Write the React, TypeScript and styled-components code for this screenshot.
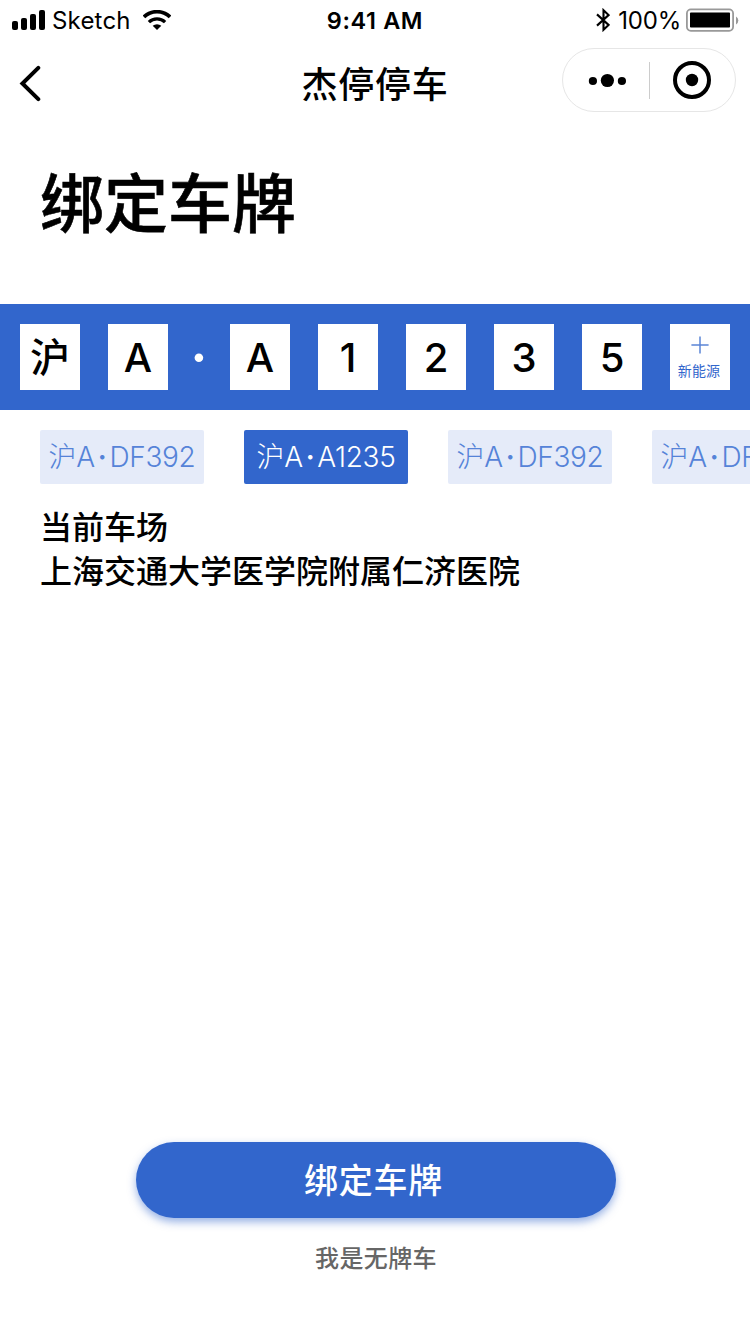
import React from 'react';
import styled, { createGlobalStyle } from 'styled-components';

const BLUE = '#3266cc';

const GlobalStyle = createGlobalStyle`
  * { box-sizing: border-box; }
  body {
    margin: 0;
    background: #fff;
    color: #000;
    font-family: Inter, "Noto Sans CJK SC", sans-serif;
  }
  button { font: inherit; border: 0; padding: 0; background: none; color: inherit; }
  svg { display: block; flex: none; }
`;

const Page = styled.div`
  width: 750px;
  height: 1334px;
  overflow: hidden;
  display: flex;
  flex-direction: column;
  background: #fff;
`;

const StatusBar = styled.header`
  height: 40px;
  padding: 0 11px 0 12px;
  display: grid;
  grid-template-columns: 1fr auto 1fr;
  align-items: center;
  font-size: 24px;
  line-height: 38px;
`;

const StatusGroup = styled.div<{ $end?: boolean }>`
  display: flex;
  align-items: center;
  justify-content: ${(p) => (p.$end ? 'flex-end' : 'flex-start')};
`;

const Carrier = styled.span`
  width: 98px;
  padding: 2px 0 0 7px;
  letter-spacing: 0.2px;
`;

const Clock = styled.span`
  padding: 2px 1px 0 0;
  font-weight: 600;
  font-size: 23.5px;
  letter-spacing: 0.6px;
`;

const BatteryLevel = styled.span`
  margin: 0 5px 0 8px;
  padding-top: 2px;
  letter-spacing: -0.2px;
`;

const NavBar = styled.nav`
  height: 88px;
  padding: 8px 14px 16px 18px;
  display: grid;
  grid-template-columns: 1fr auto 1fr;
  align-items: center;
`;

const BackButton = styled.button`
  justify-self: start;
  margin-top: 6px;
`;

const NavTitle = styled.h1`
  margin: 10px 4px 0 0;
  font-size: 36px;
  line-height: 50px;
  font-weight: 500;
  letter-spacing: 0.8px;
`;

const Capsule = styled.div`
  justify-self: end;
  width: 174px;
  height: 64px;
  border: 1px solid #e6e6e6;
  border-radius: 32px;
  display: flex;
  align-items: center;
`;

const CapsuleButton = styled.button`
  flex: 1;
  display: flex;
  justify-content: center;
`;

const CapsuleDivider = styled.div`
  width: 1px;
  height: 37px;
  background: #ccc;
`;

const Heading = styled.h2`
  margin: 0;
  height: 176px;
  padding: 31px 40px 0;
  font-size: 64px;
  line-height: 90px;
  font-weight: 500;
  -webkit-text-stroke: 0.6px #000;
`;

const PlateBar = styled.section`
  height: 106px;
  padding: 20px;
  display: flex;
  justify-content: space-between;
  background: ${BLUE};
`;

const PlateCell = styled.div`
  width: 60px;
  height: 66px;
  display: flex;
  align-items: center;
  justify-content: center;
  background: #fff;
  font-size: 40px;
  line-height: 66px;
  font-weight: 500;
  padding-top: 2px;
`;

const PlateDot = styled.div`
  width: 6px;
  display: flex;
  align-items: center;
  justify-content: center;
`;

const EnergyCell = styled.button`
  width: 60px;
  height: 66px;
  display: flex;
  flex-direction: column;
  align-items: center;
  padding-top: 12px;
  background: #fff;
  color: ${BLUE};
`;

const EnergyLabel = styled.span`
  margin: 7px 2px 0 0;
  font-size: 14px;
  line-height: 20px;
  font-weight: 400;
  letter-spacing: 0.15px;
  white-space: nowrap;
`;

const ChipRow = styled.div`
  display: flex;
  gap: 40px;
  padding: 20px 0 0 40px;
`;

const Chip = styled.button<{ $active?: boolean }>`
  flex: none;
  width: 164px;
  height: 54px;
  border-radius: 2px;
  background: ${(p) => (p.$active ? BLUE : '#e5ebf9')};
  color: ${(p) => (p.$active ? '#fff' : '#5583d8')};
  font-size: 28px;
  line-height: 55px;
  font-weight: 300;
  letter-spacing: -0.3px;
  text-align: center;
  white-space: nowrap;
`;

const ChipDot = styled.span`
  margin: 0 3px;
  font-weight: 600;
`;

const Lot = styled.section`
  flex: 1;
  padding: 22px 40px 0;
  font-size: 32px;
  line-height: 44px;
  font-weight: 500;
`;

const LotLine = styled.p`
  margin: 0;
`;

const Footer = styled.footer`
  height: 192px;
  display: flex;
  flex-direction: column;
  align-items: center;
  padding-left: 2px;
`;

const BindButton = styled.button`
  width: 480px;
  height: 76px;
  padding-right: 5px;
  border-radius: 38px;
  background: ${BLUE};
  box-shadow: 0 4px 8px rgba(50, 102, 204, 0.5);
  color: #fff;
  font-size: 34px;
  line-height: 78px;
  font-weight: 500;
  letter-spacing: 0.7px;
  text-align: center;
`;

const NoPlate = styled.button`
  margin-top: 24px;
  color: #666;
  font-size: 24px;
  line-height: 34px;
  font-weight: 500;
  letter-spacing: 0.4px;
`;

const SignalIcon = () => (
  <svg width="33" height="20" viewBox="0 0 33 20">
    <rect x="0" y="11" width="6" height="9" rx="2" />
    <rect x="9" y="8" width="6" height="12" rx="2" />
    <rect x="18" y="4" width="6" height="16" rx="2" />
    <rect x="27" y="0" width="6" height="20" rx="2" />
  </svg>
);

const WifiIcon = () => (
  <svg width="28" height="20" viewBox="0 0 28 20" fill="none" stroke="#000">
    <path d="M1 6.9A18.6 18.6 0 0 1 27 6.9" strokeWidth="3.6" />
    <path d="M5.9 12.1A11.6 11.6 0 0 1 22.1 12.1" strokeWidth="3.3" />
    <path d="M9.7 15.8A6.5 6.5 0 0 1 18.3 15.8L14 20Z" fill="#000" stroke="none" />
  </svg>
);

const BluetoothIcon = () => (
  <svg width="14" height="24" viewBox="0 0 14 24" fill="none" stroke="#000" strokeWidth="2.1">
    <path d="M1 6.4 12.6 17 7.5 21.8V2.2L12.6 7 1 17.6" />
  </svg>
);

const BatteryIcon = () => (
  <svg width="53" height="24" viewBox="0 0 53 24">
    <rect x="0.9" y="1.4" width="46.2" height="21.4" rx="4" fill="none" stroke="#999" strokeWidth="1.8" />
    <rect x="4" y="4.6" width="40" height="15" rx="0.8" />
    <path d="M50 8.4a4.6 4.6 0 0 1 0 8Z" fill="#999" />
  </svg>
);

const BackIcon = () => (
  <svg width="24" height="38" viewBox="0 0 24 38" fill="none" stroke="#000" strokeWidth="4" strokeLinecap="round">
    <path d="M20.3 3.8 4.4 19.5 20.3 35.2" />
  </svg>
);

const MoreIcon = () => (
  <svg width="40" height="16" viewBox="0 0 40 16">
    <circle cx="6.9" cy="9" r="4.1" />
    <circle cx="21.4" cy="8.5" r="6.6" />
    <circle cx="35.9" cy="9" r="4.1" />
  </svg>
);

const CloseIcon = () => (
  <svg width="38" height="38" viewBox="0 0 38 38">
    <circle cx="19" cy="19" r="17" fill="none" stroke="#000" strokeWidth="4" />
    <circle cx="19" cy="19" r="6.2" />
  </svg>
);

const DotIcon = () => (
  <svg width="10" height="10" viewBox="0 0 10 10">
    <circle cx="4.9" cy="5.7" r="4.3" fill="#fff" />
  </svg>
);

const PlusIcon = () => (
  <svg width="18" height="18" viewBox="0 0 18 18" stroke="#5b85d6" strokeWidth="1.5">
    <path d="M0.4 9H17.6M9 0.4V17.6" />
  </svg>
);

const region = ['沪', 'A'];
const serial = ['A', '1', '2', '3', '5'];
const savedPlates = [
  { area: '沪A', serial: 'DF392' },
  { area: '沪A', serial: 'A1235' },
  { area: '沪A', serial: 'DF392' },
  { area: '沪A', serial: 'DF392' },
];

export default function App() {
  return (
    <Page>
      <GlobalStyle />
      <StatusBar>
        <StatusGroup>
          <SignalIcon />
          <Carrier>Sketch</Carrier>
          <WifiIcon />
        </StatusGroup>
        <Clock>9:41 AM</Clock>
        <StatusGroup $end>
          <BluetoothIcon />
          <BatteryLevel>100%</BatteryLevel>
          <BatteryIcon />
        </StatusGroup>
      </StatusBar>
      <NavBar>
        <BackButton aria-label="返回"><BackIcon /></BackButton>
        <NavTitle>杰停停车</NavTitle>
        <Capsule>
          <CapsuleButton aria-label="更多"><MoreIcon /></CapsuleButton>
          <CapsuleDivider />
          <CapsuleButton aria-label="关闭"><CloseIcon /></CapsuleButton>
        </Capsule>
      </NavBar>
      <Heading>绑定车牌</Heading>
      <PlateBar>
        {region.map((c) => <PlateCell key={c}>{c}</PlateCell>)}
        <PlateDot><DotIcon /></PlateDot>
        {serial.map((c) => <PlateCell key={c}>{c}</PlateCell>)}
        <EnergyCell>
          <PlusIcon />
          <EnergyLabel>新能源</EnergyLabel>
        </EnergyCell>
      </PlateBar>
      <ChipRow>
        {savedPlates.map((plate, i) => (
          <Chip key={i} $active={i === 1}>
            {plate.area}<ChipDot>·</ChipDot>{plate.serial}
          </Chip>
        ))}
      </ChipRow>
      <Lot>
        <LotLine>当前车场</LotLine>
        <LotLine>上海交通大学医学院附属仁济医院</LotLine>
      </Lot>
      <Footer>
        <BindButton>绑定车牌</BindButton>
        <NoPlate>我是无牌车</NoPlate>
      </Footer>
    </Page>
  );
}
